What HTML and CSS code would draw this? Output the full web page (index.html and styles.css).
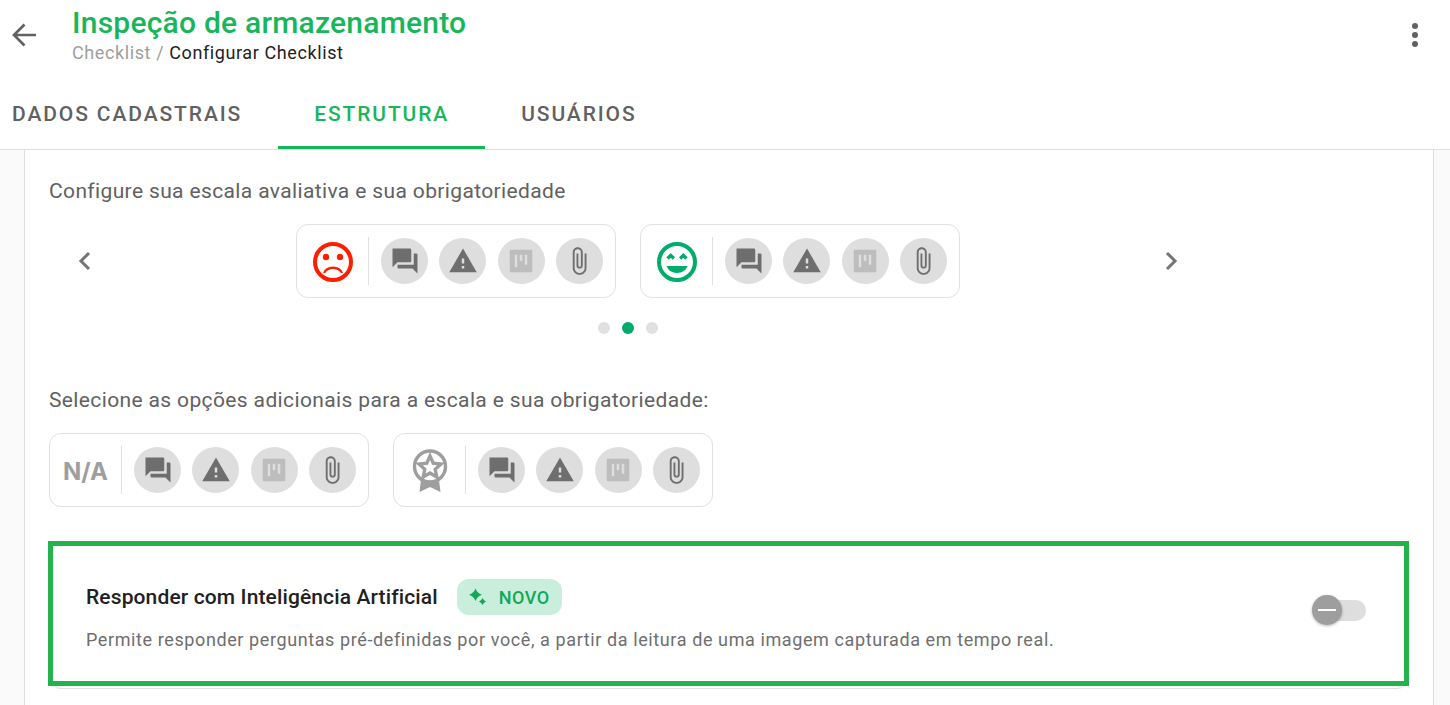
FILE: index.html
```html
<!DOCTYPE html>
<html lang="pt-BR">
<head>
<meta charset="utf-8">
<meta name="viewport" content="width=device-width, initial-scale=1">
<title>Inspeção de armazenamento</title>
<link rel="stylesheet" href="styles.css">
</head>
<body>
<svg class="sprite" aria-hidden="true">
  <symbol id="comment" viewBox="0 0 24 24"><path d="M17 12V3a1 1 0 0 0-1-1H2v15l4-4h10a1 1 0 0 0 1-1m4-6h-2v9H6v2a1 1 0 0 0 1 1h11l4 4V7a1 1 0 0 0-1-1z"/></symbol>
  <symbol id="alert" viewBox="0 0 24 24"><path d="M1 21h22L12 2 1 21zm12-3h-2v-2h2v2zm0-4h-2v-4h2v4z"/></symbol>
  <symbol id="board" viewBox="0 0 24 24"><path fill-rule="evenodd" d="M4 3h16a1 1 0 0 1 1 1v16a1 1 0 0 1-1 1H4a1 1 0 0 1-1-1V4a1 1 0 0 1 1-1zm3 4v10h2V7zm4 0v5h2V7zm4 0v8h2V7z"/></symbol>
  <symbol id="clip" viewBox="0 0 24 24"><path d="M16.500 6v11.500c0 2.210-1.790 4-4 4s-4-1.790-4-4V5a2.500 2.500 0 0 1 5 0v10.500c0 .55-.45 1-1 1s-1-.45-1-1V6H10v9.500a2.500 2.500 0 0 0 5 0V5c0-2.210-1.790-4-4-4S7 2.790 7 5v12.500c0 3.040 2.460 5.500 5.500 5.500s5.500-2.460 5.500-5.500V6z"/></symbol>
</svg>

<header class="header">
  <div class="topbar">
    <button class="icon-button" type="button" aria-label="Voltar">
      <svg class="icon-arrow" viewBox="0 0 24 24"><path d="M24 12H2M12.500 1.500 2 12l10.500 10.500"/></svg>
    </button>
    <div class="heading">
      <h1 class="title">Inspeção de armazenamento</h1>
      <nav class="breadcrumb" aria-label="Trilha"><a class="crumb" href="#">Checklist</a> / <span class="crumb-current">Configurar Checklist</span></nav>
    </div>
    <button class="icon-button" type="button" aria-label="Mais opções">
      <svg class="icon-more" viewBox="0 0 24 24"><circle cx="12" cy="3" r="3"/><circle cx="12" cy="12" r="3"/><circle cx="12" cy="21" r="3"/></svg>
    </button>
  </div>
  <div class="tabs" role="tablist">
    <button class="tab tab-first" type="button" role="tab" aria-selected="false">DADOS CADASTRAIS</button>
    <button class="tab tab-active" type="button" role="tab" aria-selected="true">ESTRUTURA</button>
    <button class="tab" type="button" role="tab" aria-selected="false">USUÁRIOS</button>
  </div>
</header>

<main class="panel">
  <h2 class="label">Configure sua escala avaliativa e sua obrigatoriedade</h2>
  <div class="carousel">
    <button class="carousel-arrow" type="button" aria-label="Anterior"><svg class="icon-chevron" viewBox="0 0 24 24"><path d="m15 6-6 6 6 6"/></svg></button>
    <div class="options">
      <div class="option">
        <div class="option-face"><svg class="face face-sad" viewBox="0 0 40 40"><circle class="ring" cx="20" cy="20" r="18"/><circle cx="13" cy="15" r="3.200"/><circle cx="27" cy="15" r="3.200"/><path d="M10 31q2-6.500 10-6.500T30 31h-2q-3-4-8-4t-8 4z"/></svg></div>
        <div class="actions">
          <button class="action" type="button" aria-label="Comentário"><svg class="icon"><use href="#comment"/></svg></button>
          <button class="action" type="button" aria-label="Alerta"><svg class="icon"><use href="#alert"/></svg></button>
          <button class="action action-muted" type="button" aria-label="Plano de ação"><svg class="icon"><use href="#board"/></svg></button>
          <button class="action" type="button" aria-label="Anexo"><svg class="icon"><use href="#clip"/></svg></button>
        </div>
      </div>
      <div class="option">
        <div class="option-face"><svg class="face face-happy" viewBox="0 0 40 40"><circle class="ring" cx="20" cy="20" r="18"/><path class="eyes" d="m10.500 16.500 3.200-3.200 3.200 3.200m6.200 0 3.200-3.200 3.200 3.200"/><path d="M9.500 24h21q-2.500 7-10.500 7T9.500 24z"/></svg></div>
        <div class="actions">
          <button class="action" type="button" aria-label="Comentário"><svg class="icon"><use href="#comment"/></svg></button>
          <button class="action" type="button" aria-label="Alerta"><svg class="icon"><use href="#alert"/></svg></button>
          <button class="action action-muted" type="button" aria-label="Plano de ação"><svg class="icon"><use href="#board"/></svg></button>
          <button class="action" type="button" aria-label="Anexo"><svg class="icon"><use href="#clip"/></svg></button>
        </div>
      </div>
    </div>
    <button class="carousel-arrow" type="button" aria-label="Próximo"><svg class="icon-chevron" viewBox="0 0 24 24"><path d="m9 6 6 6-6 6"/></svg></button>
    <div class="dots">
      <button class="dot" type="button" aria-label="Página 1"></button>
      <button class="dot dot-active" type="button" aria-label="Página 2"></button>
      <button class="dot" type="button" aria-label="Página 3"></button>
    </div>
  </div>

  <h2 class="label">Selecione as opções adicionais para a escala e sua obrigatoriedade:</h2>
  <div class="options">
    <div class="option">
      <div class="option-face"><span class="not-applicable">N/A</span></div>
      <div class="actions">
        <button class="action" type="button" aria-label="Comentário"><svg class="icon"><use href="#comment"/></svg></button>
        <button class="action" type="button" aria-label="Alerta"><svg class="icon"><use href="#alert"/></svg></button>
        <button class="action action-muted" type="button" aria-label="Plano de ação"><svg class="icon"><use href="#board"/></svg></button>
        <button class="action" type="button" aria-label="Anexo"><svg class="icon"><use href="#clip"/></svg></button>
      </div>
    </div>
    <div class="option">
      <div class="option-face"><svg class="medal" viewBox="0 0 40 44"><circle class="medal-ring" cx="20" cy="17.500" r="15.500"/><path class="medal-star" d="m20 7 3.200 7.200 7.800.8-5.800 5.300 1.600 7.700-6.800-4-6.800 4 1.600-7.700L9 15l7.800-.8z"/><path d="M11 31q9 4.500 18 0l1.500 12L20 38 9.500 43z"/></svg></div>
      <div class="actions">
        <button class="action" type="button" aria-label="Comentário"><svg class="icon"><use href="#comment"/></svg></button>
        <button class="action" type="button" aria-label="Alerta"><svg class="icon"><use href="#alert"/></svg></button>
        <button class="action action-muted" type="button" aria-label="Plano de ação"><svg class="icon"><use href="#board"/></svg></button>
        <button class="action" type="button" aria-label="Anexo"><svg class="icon"><use href="#clip"/></svg></button>
      </div>
    </div>
  </div>

  <section class="ai-card">
    <div class="ai-text">
      <div class="ai-heading">
        <label class="ai-title" for="ai-switch">Responder com Inteligência Artificial</label>
        <span class="badge"><svg class="icon-sparkle" viewBox="0 0 18 18"><path d="M6.500.5Q8 5 13 6.700 8 8.500 6.500 13 5 8.500 0 6.700 5 5 6.500.5zM13.500 10q1 2.500 3.500 3.500-2.500 1-3.500 3.500-1-2.500-3.500-3.500 2.500-1 3.500-3.500z"/></svg>NOVO</span>
      </div>
      <p class="ai-description" id="ai-description">Permite responder perguntas pré-definidas por você, a partir da leitura de uma imagem capturada em tempo real.</p>
    </div>
    <input class="switch" id="ai-switch" type="checkbox" role="switch" aria-describedby="ai-description">
    <div class="highlight"></div>
  </section>
</main>
</body>
</html>
```

FILE: styles.css
```css
* { box-sizing: border-box; }

body {
  margin: 0;
  min-height: 100vh;
  display: flex;
  flex-direction: column;
  background: #fafafa;
  color: #616161;
  font-family: Roboto, sans-serif;
}

h1, h2, p { margin: 0; }

button {
  padding: 0;
  border: 0;
  background: none;
  color: inherit;
  font: inherit;
}

svg { display: block; fill: currentColor; }

.sprite { position: absolute; width: 0; height: 0; }

.header {
  background: #fff;
  border-bottom: 1px solid #dedede;
}

.topbar {
  display: flex;
  align-items: center;
  height: 70px;
  padding: 0 23px 0 12px;
}

.icon-button { color: #616161; }

.icon-arrow {
  width: 24px;
  height: 24px;
  fill: none;
  stroke: currentColor;
  stroke-width: 2.7;
}

.icon-more { width: 24px; height: 24px; }

.heading { flex: 1; padding-left: 36px; }

.title {
  color: #18b65b;
  font-size: 30px;
  font-weight: 500;
  line-height: 36px;
  letter-spacing: 0.0075em;
}

.breadcrumb {
  color: #9e9e9e;
  font-size: 18px;
  line-height: 24px;
  letter-spacing: 0.0333em;
}

.crumb { color: inherit; text-decoration: none; }

.crumb-current { color: #212121; }

.tabs { display: flex; height: 79px; }

.tab {
  padding: 12px 36px 0;
  border-bottom: 3px solid transparent;
  font-size: 21px;
  font-weight: 500;
  letter-spacing: 0.09em;
  white-space: nowrap;
}

.tab-first { padding-left: 12px; }

.tab-active { border-color: #18b65b; color: #18b65b; }

.panel {
  flex: 1;
  margin: 0 16px 0 24px;
  padding: 24px 24px 16px;
  border: solid #dedede;
  border-width: 0 1px;
  background: #fff;
}

.label {
  margin-bottom: 16px;
  font-size: 21px;
  font-weight: 400;
  line-height: 34px;
  letter-spacing: 0.0175em;
}

.carousel {
  display: grid;
  grid-template-columns: 72px 1fr 72px;
  align-items: center;
  justify-items: center;
  row-gap: 24px;
  max-width: 1158px;
  margin-bottom: 49px;
}

.carousel-arrow { color: #757575; }

.icon-chevron {
  width: 32px;
  height: 32px;
  fill: none;
  stroke: currentColor;
  stroke-width: 2.300;
}

.dots {
  grid-column: 1 / -1;
  display: flex;
  gap: 12px;
}

.dot {
  width: 12px;
  height: 12px;
  border-radius: 50%;
  background: #e0e0e0;
}

.dot-active { background: #00ac69; }

.options { display: flex; gap: 24px; }

.option {
  display: flex;
  align-items: center;
  width: 320px;
  height: 74px;
  border: 1px solid #e0e0e0;
  border-radius: 12px;
}

.option-face {
  display: grid;
  place-items: center;
  width: 72px;
  height: 48px;
  padding-top: 2px;
  border-right: 1px solid #e0e0e0;
}

.face { width: 40px; height: 40px; }

.face-sad { color: #ff1f00; }

.face-happy { color: #00ac69; }

.ring { fill: none; stroke: currentColor; stroke-width: 4; }

.eyes { fill: none; stroke: currentColor; stroke-width: 3.200; }

.not-applicable {
  color: #9e9e9e;
  font-family: Inter, sans-serif;
  font-size: 24px;
  font-weight: 700;
}

.medal { width: 40px; height: 44px; color: #9e9e9e; }

.medal-ring { fill: none; stroke: currentColor; stroke-width: 3.400; }

.medal-star { fill: none; stroke: currentColor; stroke-width: 3.400; }

.actions {
  flex: 1;
  display: flex;
  justify-content: space-between;
  padding: 0 12px;
}

.action {
  display: grid;
  place-items: center;
  width: 47px;
  height: 46px;
  border-radius: 50%;
  background: #dedede;
  color: #6e6e6e;
}

.action-muted { color: #bdbdbd; }

.icon { width: 30px; height: 30px; }

.ai-card {
  position: relative;
  display: flex;
  align-items: flex-start;
  justify-content: space-between;
  margin-top: 35px;
  padding: 36px 42px 36px 36px;
  border: 1px solid #e0e0e0;
  border-radius: 12px;
}

.highlight {
  position: absolute;
  inset: -2px -1px 2px -2px;
  border: 5px solid #24b24c;
  pointer-events: none;
}

.ai-heading { display: flex; align-items: center; gap: 19px; }

.ai-title {
  color: #212121;
  font-size: 21px;
  font-weight: 500;
  letter-spacing: 0.006em;
}

.badge {
  display: flex;
  align-items: center;
  gap: 12px;
  height: 36px;
  padding: 0 12px;
  border-radius: 12px;
  background: #c9eedc;
  color: #12a856;
  font-size: 18px;
  font-weight: 500;
  letter-spacing: 0.03em;
}

.icon-sparkle { width: 18px; height: 18px; }

.ai-description {
  margin-top: 12px;
  color: #6e6e6e;
  font-size: 18px;
  line-height: 25px;
  letter-spacing: 0.0333em;
}

.switch {
  appearance: none;
  display: grid;
  align-items: center;
  width: 54px;
  height: 30px;
  margin: 16px 0 0;
}

.switch::before {
  content: "";
  grid-area: 1 / 1;
  height: 21px;
  margin-left: 3px;
  border-radius: 11px;
  background: #dedede;
}

.switch::after {
  content: "";
  grid-area: 1 / 1;
  width: 30px;
  height: 30px;
  border-radius: 50%;
  background: linear-gradient(#fff, #fff) center / 18px 2px no-repeat #9e9e9e;
  box-shadow: 0 1px 3px rgba(0, 0, 0, 0.300);
}

.switch:checked::after { justify-self: end; background-color: #18b65b; }
```
